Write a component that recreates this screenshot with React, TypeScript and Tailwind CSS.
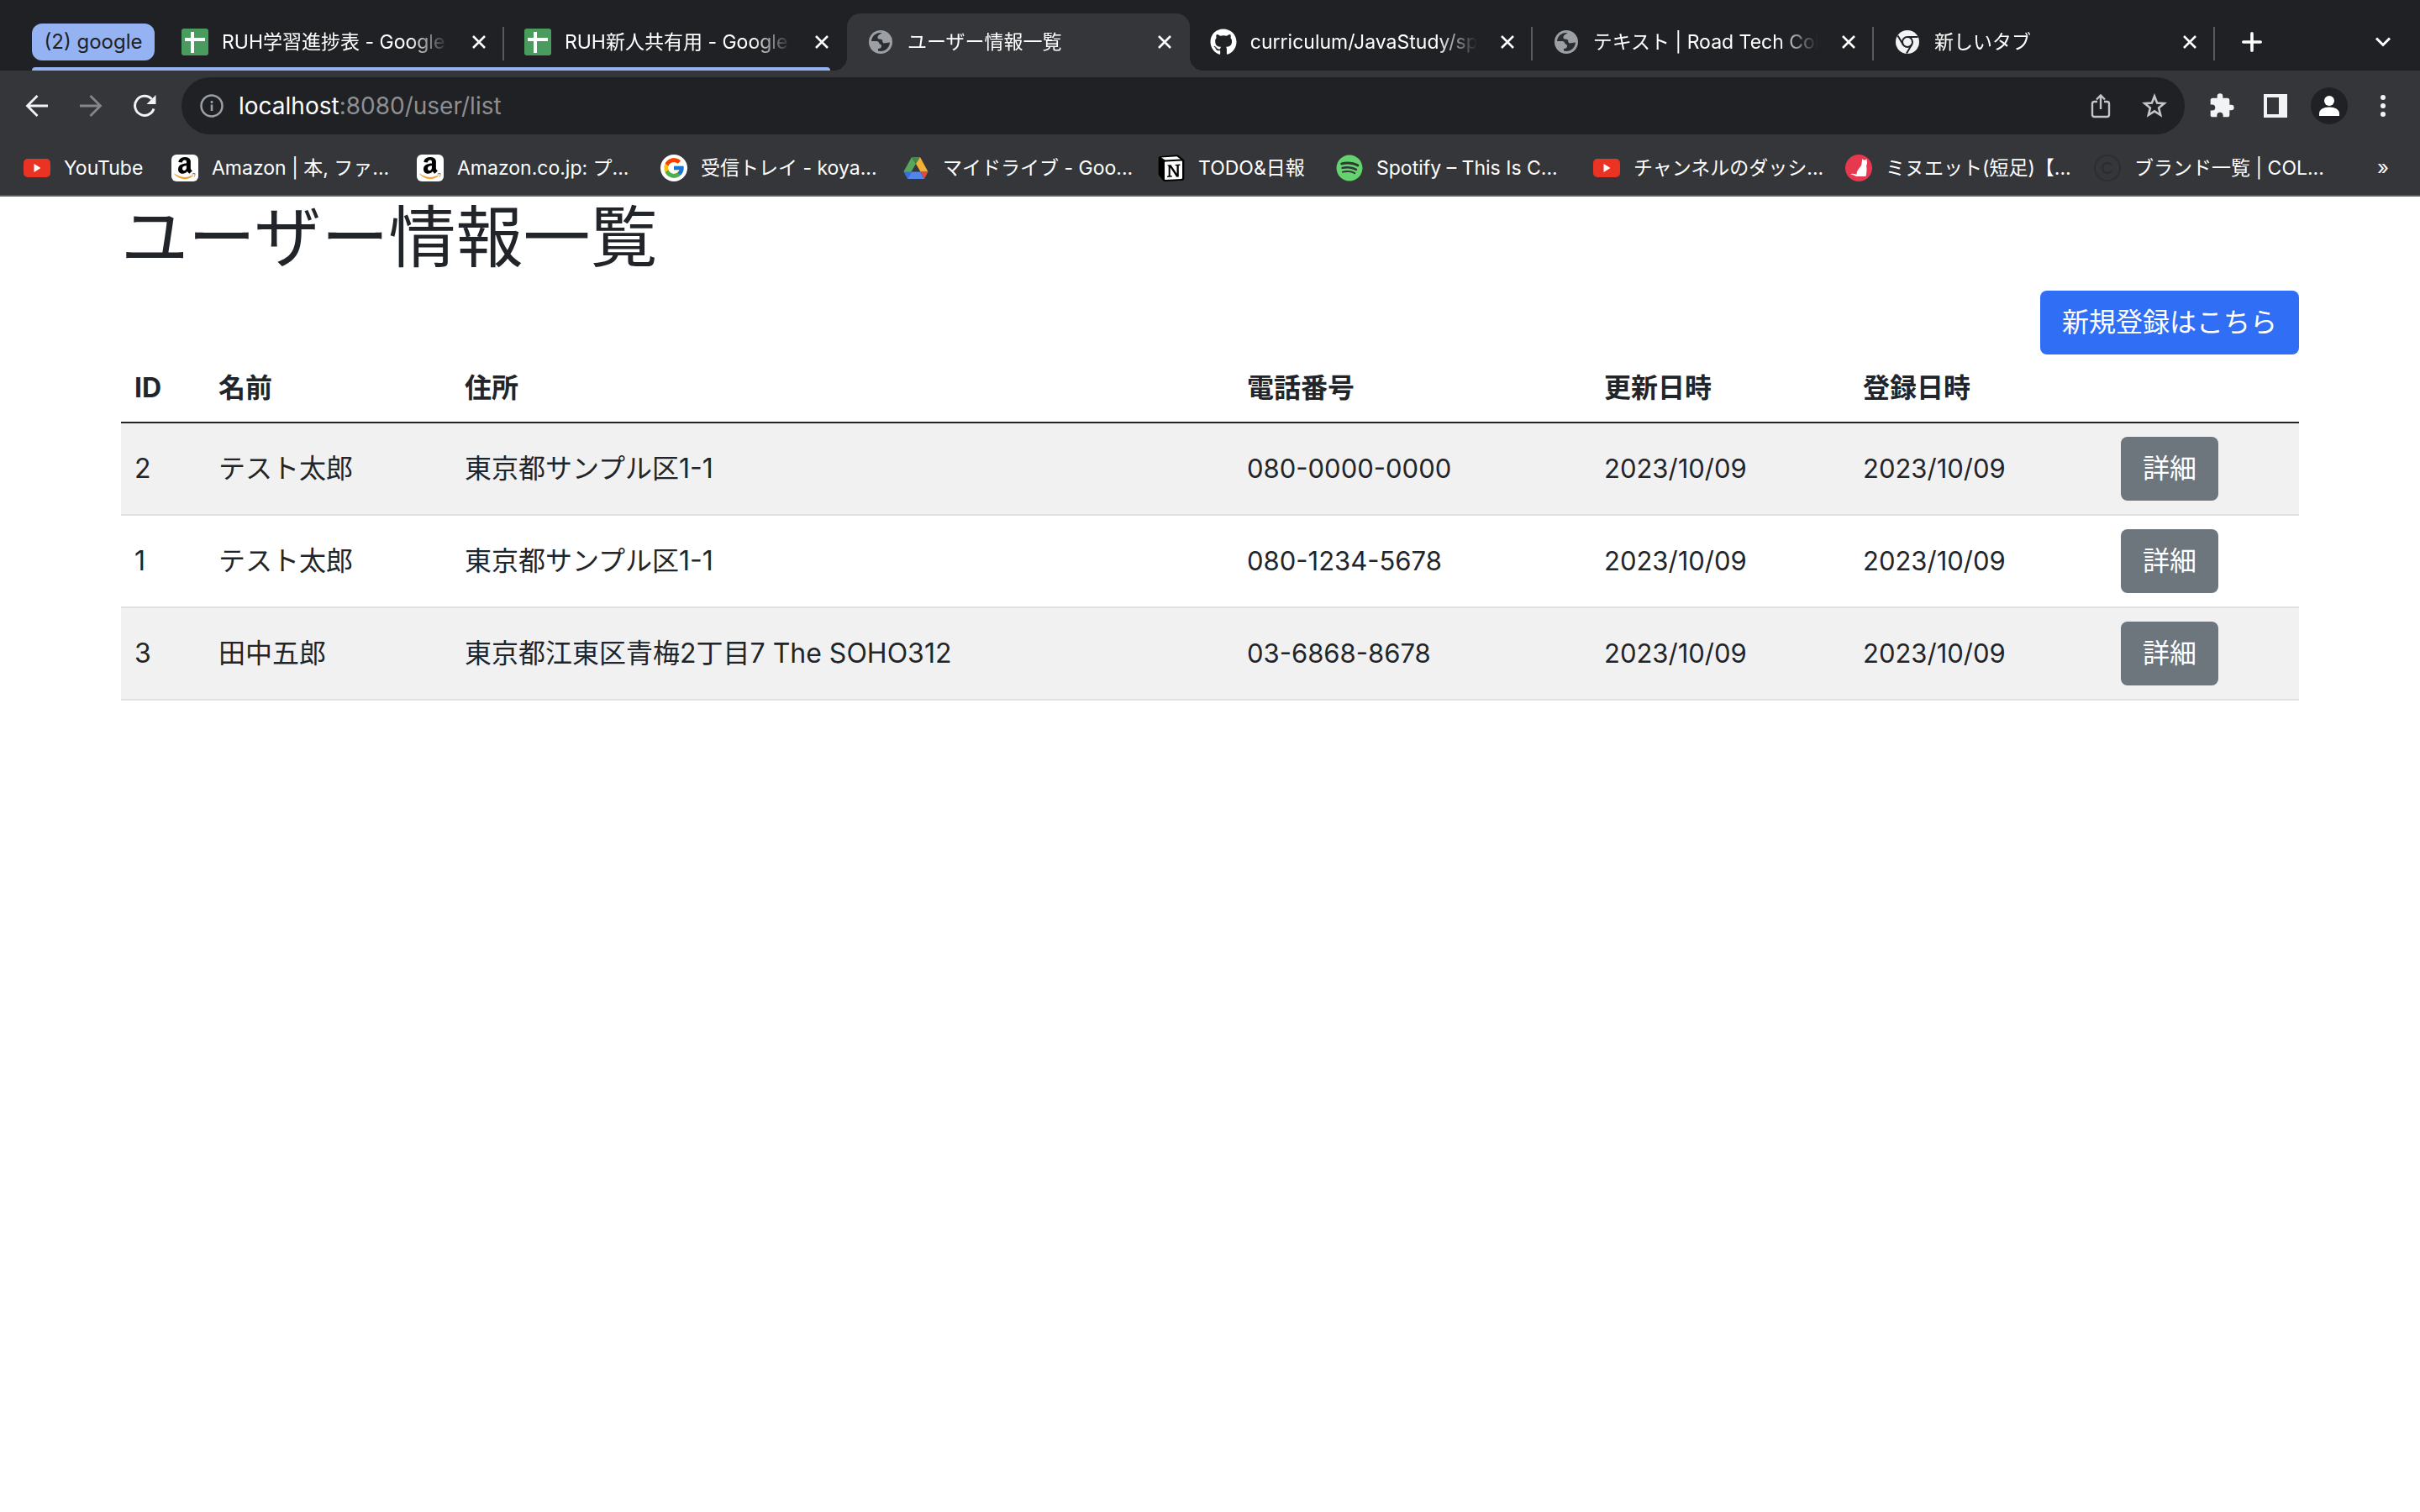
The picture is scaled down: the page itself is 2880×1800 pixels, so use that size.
import { FaAmazon, FaGithub, FaSpotify } from "react-icons/fa";
import { FcGoogle } from "react-icons/fc";
import type { ReactNode } from "react";

function SheetsIcon() {
  return (
    <svg viewBox="0 0 32 32" className="size-8">
      <rect width="32" height="32" rx="3" fill="#4a9c5e" />
      <path d="M13 4v25M4 13h24" stroke="#fff" strokeWidth="4" />
    </svg>
  );
}

function GlobeIcon() {
  return (
    <svg viewBox="0 0 32 32" className="size-8">
      <circle cx="16" cy="16" r="14" fill="#9aa0a6" />
      <path d="M5 15A11 11 0 0 1 17.500 5C15.500 7 12.500 7.500 12.500 10.500c0 2.500 2.500 1.800 4.500 2.500 2 .7.500 4 3 4.500l7-1A11 11 0 0 1 13 26.600V24c3 0 4-1.500 4-3.500s-3-2-3-3.500c0-2-3-2-5-2z" fill="#2c2d30" />
    </svg>
  );
}

function ChromeIcon() {
  return (
    <svg viewBox="0 0 32 32" className="size-8">
      <circle cx="16" cy="16" r="14" fill="#f1f3f4" />
      <circle cx="16" cy="16" r="6" fill="none" stroke="#202124" strokeWidth="2" />
      <path d="M16 10H28.500M10.800 19 4.500 8.500M21.200 19 15 29.500" stroke="#202124" strokeWidth="2" />
    </svg>
  );
}

function YouTubeIcon() {
  return (
    <svg viewBox="0 0 32 32" className="size-8">
      <rect y="5" width="32" height="22" rx="5" fill="#ea3323" />
      <path d="M12.500 11v10l8-5z" fill="#fff" />
    </svg>
  );
}

function AmazonIcon() {
  return (
    <span className="relative flex size-8 items-center justify-center rounded-md bg-white">
      <FaAmazon className="size-[30px] text-black [clip-path:inset(0_0_27%_0)]" />
      <FaAmazon className="absolute size-[30px] text-[#f0a136] [clip-path:inset(73%_0_0_0)]" />
    </span>
  );
}

function GoogleIcon() {
  return (
    <span className="flex size-8 items-center justify-center rounded-full bg-white">
      <FcGoogle className="size-7" />
    </span>
  );
}

function DriveIcon() {
  return (
    <svg viewBox="0 0 32 32" className="size-8">
      <path d="M11 3 1.500 20 6 28 16 11z" fill="#58a55c" />
      <path d="M11 3h10l-5 8z" fill="#3d8b47" />
      <path d="M21 3 16 11l5.500 9.500h9z" fill="#f2b136" />
      <path d="M1.500 20.500H11L6 29z" fill="#3a6ee0" />
      <path d="M11 20.500h10.500L26 29H6z" fill="#5086ec" />
      <path d="M21.500 20.500h9L26 29z" fill="#dd4f3c" />
    </svg>
  );
}

function NotionIcon() {
  return (
    <svg viewBox="0 0 32 32" className="size-8">
      <path d="M3 2 21 .500c2-.2 3 .1 4.500 1.200l4.500 3.500c1 .7 1.300 1.300 1.300 2.500v20.500c0 1.500-.7 2.500-2.300 2.600L9 32c-1.300 0-2-.2-3-1.300L1.800 25.500C1 24.500.700 23.800.700 22.800V4.500C.700 3 1.500 2.200 3 2z" fill="#000" />
      <path d="M4 3.600 22.500 2.200 27 5.400 8.500 6.600z" fill="#fff" />
      <path d="M8 9.500c0-.6.400-1 1-1L28 7.400c.600 0 1 .3 1 1v19.300c0 .7-.4 1.100-1 1.200L9 30c-.6 0-1-.4-1-1z" fill="#fff" />
      <path d="M11 12.500l4.500-.3 7 10.500v-9.200l-2-.4v-1.200l6-.4v1.200l-1.700.6v13.200l-2.600.3-7.500-11.600v9.800l2.300.6v1l-6 .4v-1.200l1.700-.6V14z" fill="#000" />
    </svg>
  );
}

function CatIcon() {
  return (
    <svg viewBox="0 0 32 32" className="size-8">
      <circle cx="16" cy="16" r="16" fill="#e63950" />
      <path d="M20.500 5l1.500 1.500h2L25.500 5l.5 4.500c.2 2-1 2.800-.8 4.500.6 4 .3 8-.7 12H14c-1.500 0-2.500-1-4-1.500-1.300-.4-2.600-.5-4-1 2.500-1.500 5-.8 7.500.2C13.500 19 17 16 19 13c.8-2 .5-5 1.500-8z" fill="#fff" />
    </svg>
  );
}

function BrandIcon() {
  return (
    <svg viewBox="0 0 32 32" className="size-8">
      <circle cx="16" cy="16" r="15" fill="none" stroke="#2b2c2f" strokeWidth="1.500" />
      <path d="M21 12.500a6 6 0 1 0 0 7" fill="none" stroke="#2b2c2f" strokeWidth="2" />
    </svg>
  );
}

type Tab = { title: string; icon: ReactNode; size: string; active?: boolean; divider?: boolean };

const tabs: Tab[] = [
  { title: "RUH学習進捗表 - Google", icon: <SheetsIcon />, size: "flex-[408]", divider: true },
  { title: "RUH新人共有用 - Google", icon: <SheetsIcon />, size: "flex-[408]" },
  { title: "ユーザー情報一覧", icon: <GlobeIcon />, size: "flex-[408]", active: true },
  { title: "curriculum/JavaStudy/sp", icon: <FaGithub className="size-8 text-white" />, size: "flex-[408]", divider: true },
  { title: "テキスト | Road Tech Col", icon: <GlobeIcon />, size: "flex-[406]", divider: true },
  { title: "新しいタブ", icon: <ChromeIcon />, size: "flex-[406]", divider: true },
];

const bookmarks = [
  { title: "YouTube", icon: <YouTubeIcon />, width: "w-[176px]" },
  { title: "Amazon | 本, ファ...", icon: <AmazonIcon />, width: "w-[292px]" },
  { title: "Amazon.co.jp: プ...", icon: <AmazonIcon />, width: "w-[290px]" },
  { title: "受信トレイ - koya...", icon: <GoogleIcon />, width: "w-[288px]" },
  { title: "マイドライブ - Goo...", icon: <DriveIcon />, width: "w-[304px]" },
  { title: "TODO&日報", icon: <NotionIcon />, width: "w-[212px]" },
  { title: "Spotify – This Is C...", icon: <FaSpotify className="size-8 text-[#65d36e]" />, width: "w-[306px]" },
  { title: "チャンネルのダッシ...", icon: <YouTubeIcon />, width: "w-[300px]" },
  { title: "ミヌエット(短足)【...", icon: <CatIcon />, width: "w-[296px]" },
  { title: "ブランド一覧 | COL...", icon: <BrandIcon />, width: "w-[296px]" },
];

const users = [
  { id: 2, name: "テスト太郎", address: "東京都サンプル区1-1", tel: "080-0000-0000", updated: "2023/10/09", created: "2023/10/09" },
  { id: 1, name: "テスト太郎", address: "東京都サンプル区1-1", tel: "080-1234-5678", updated: "2023/10/09", created: "2023/10/09" },
  { id: 3, name: "田中五郎", address: "東京都江東区青梅2丁目7 The SOHO312", tel: "03-6868-8678", updated: "2023/10/09", created: "2023/10/09" },
];

function TabItem({ tab }: { tab: Tab }) {
  return (
    <div className={`relative flex h-full min-w-0 items-center rounded-t-2xl pr-3.5 pl-6 ${tab.size} ${tab.active ? "bg-[#35363a]" : ""}`}>
      {tab.active && (
        <>
          <span className="absolute bottom-0 -left-4 size-4 bg-[radial-gradient(circle_at_0_0,transparent_16px,#35363a_16px)]" />
          <span className="absolute -right-4 bottom-0 size-4 bg-[radial-gradient(circle_at_100%_0,transparent_16px,#35363a_16px)]" />
        </>
      )}
      <span className="shrink-0">{tab.icon}</span>
      <span className="mr-5 ml-4 min-w-0 flex-1 overflow-hidden text-[23px] whitespace-nowrap text-white [mask-image:linear-gradient(to_right,black_calc(100%-48px),transparent)]">
        {tab.title}
      </span>
      <button aria-label="タブを閉じる" className="flex size-8 shrink-0 items-center justify-center">
        <svg viewBox="0 0 16 16" className="size-4">
          <path d="M1 1l14 14M15 1 1 15" stroke="#fff" strokeWidth="2.600" />
        </svg>
      </button>
      {tab.divider && <span className="absolute right-0 bottom-3 h-10 w-0.5 bg-[#5a5b5e]" />}
    </div>
  );
}

function TabStrip() {
  return (
    <div className="flex h-[84px] bg-[#202124] pt-4 pl-[38px]">
      <div className="relative flex w-[154px] shrink-0 items-center">
        <button className="h-11 w-[146px] rounded-xl bg-[#95b2f3] text-2xl text-[#202124]">(2) google</button>
        <span className="absolute bottom-0 left-0 h-1 w-[950px] rounded-t-sm bg-[#95b2f3]" />
      </div>
      <div className="flex min-w-0 flex-1">
        {tabs.map((tab) => (
          <TabItem key={tab.title} tab={tab} />
        ))}
      </div>
      <div className="flex w-[244px] shrink-0 items-center justify-between pr-7 pl-7">
        <button aria-label="新しいタブを開く" className="flex size-8 items-center justify-center">
          <svg viewBox="0 0 24 24" className="size-6">
            <path d="M12 1.800v20.400M1.800 12h20.400" stroke="#fff" strokeWidth="3.600" strokeLinecap="round" />
          </svg>
        </button>
        <button aria-label="タブを検索" className="flex size-8 items-center justify-center">
          <svg viewBox="0 0 20 12" className="h-3 w-5">
            <path d="M2 1.500l8 8 8-8" fill="none" stroke="#fff" strokeWidth="3" />
          </svg>
        </button>
      </div>
    </div>
  );
}

function IconButton({ label, children }: { label: string; children: ReactNode }) {
  return (
    <button aria-label={label} className="flex size-16 shrink-0 items-center justify-center">
      {children}
    </button>
  );
}

function Toolbar() {
  return (
    <div className="flex h-[84px] items-center bg-[#35363a] pr-3 pl-3">
      <IconButton label="戻る">
        <svg viewBox="0 0 28 28" className="size-7" fill="none" stroke="#f1f3f4" strokeWidth="2.800">
          <path d="M27 14H3M14.500 2 2.500 14l12 12" />
        </svg>
      </IconButton>
      <IconButton label="進む">
        <svg viewBox="0 0 28 28" className="size-7" fill="none" stroke="#85868a" strokeWidth="2.800">
          <path d="M1 14h24M13.500 2l12 12-12 12" />
        </svg>
      </IconButton>
      <IconButton label="再読み込み">
        <svg viewBox="0 0 28 28" className="size-7">
          <path d="M25 17.500A11.500 11.500 0 1 1 22.500 6" fill="none" stroke="#f1f3f4" strokeWidth="3" />
          <path d="M27.500 1v11h-11z" fill="#f1f3f4" />
        </svg>
      </IconButton>
      <div className="ml-3 flex h-[68px] min-w-0 flex-1 items-center rounded-full bg-[#202124] pr-1 pl-5.5">
        <svg viewBox="0 0 28 28" className="size-7 shrink-0">
          <circle cx="14" cy="14" r="12.500" fill="none" stroke="#9aa0a6" strokeWidth="2.500" />
          <path d="M14 12.500v7.500M14 8v3" stroke="#9aa0a6" strokeWidth="2.600" />
        </svg>
        <div className="ml-4.5 flex-1 text-[28px] text-[#8e8f92]">
          <span className="text-white">localhost</span>:8080/user/list
        </div>
        <IconButton label="共有">
          <svg viewBox="0 0 24 30" className="h-[30px] w-6" fill="none" stroke="#c4c5c7" strokeWidth="2.400">
            <path d="M8 10H4.500A2.500 2.500 0 0 0 2 12.500v13A2.500 2.500 0 0 0 4.500 28h15a2.500 2.500 0 0 0 2.500-2.500v-13a2.500 2.500 0 0 0-2.500-2.500H16M12 19V3M7 7.500l5-5 5 5" />
          </svg>
        </IconButton>
        <IconButton label="ブックマークに追加">
          <svg viewBox="0 0 30 30" className="size-[30px]" fill="none" stroke="#c4c5c7" strokeWidth="2.600">
            <path d="M15 3.500l3.100 8 8.600.6-6.600 5.500 2.100 8.400L15 21.400 7.800 26l2.100-8.400-6.600-5.500 8.600-.6z" />
          </svg>
        </IconButton>
      </div>
      <div className="flex pl-3">
        <IconButton label="拡張機能">
          <svg viewBox="0 0 24 24" className="size-8" fill="#f1f3f4">
            <path d="M20.500 11H19V7a2 2 0 0 0-2-2h-4V3.500a2.500 2.500 0 0 0-5 0V5H4a2 2 0 0 0-2 2v3.800h1.500a2.700 2.700 0 0 1 0 5.400H2V20a2 2 0 0 0 2 2h3.800v-1.500a2.700 2.700 0 0 1 5.400 0V22H17a2 2 0 0 0 2-2v-4h1.500a2.500 2.500 0 0 0 0-5z" />
          </svg>
        </IconButton>
        <IconButton label="サイドパネル">
          <svg viewBox="0 0 28 28" className="size-7">
            <path d="M0 0h28v28H0zM4 4v20h14V4z" fill="#f1f3f4" fillRule="evenodd" />
          </svg>
        </IconButton>
        <IconButton label="プロフィール">
          <svg viewBox="0 0 44 44" className="size-11">
            <circle cx="22" cy="22" r="22" fill="#202124" />
            <circle cx="22" cy="16" r="6" fill="#fff" />
            <path d="M10 34v-3c0-4.500 5-7.500 12-7.500s12 3 12 7.500v3z" fill="#fff" />
          </svg>
        </IconButton>
        <IconButton label="メニュー">
          <svg viewBox="0 0 6 28" className="h-7 w-1.5" fill="#f1f3f4">
            <circle cx="3" cy="4" r="3" />
            <circle cx="3" cy="14" r="3" />
            <circle cx="3" cy="24" r="3" />
          </svg>
        </IconButton>
      </div>
    </div>
  );
}

function BookmarksBar() {
  return (
    <nav className="flex h-[66px] items-center border-b-2 border-[#5b5c5f] bg-[#35363a] pr-7 pl-7 text-[23px] text-white">
      {bookmarks.map((b) => (
        <a key={b.title} href="#" className={`flex shrink-0 items-center gap-4 whitespace-nowrap ${b.width}`}>
          <span className="shrink-0">{b.icon}</span>
          {b.title}
        </a>
      ))}
      <button aria-label="その他のブックマーク" className="ml-auto flex size-8 items-center justify-center text-2xl">»</button>
    </nav>
  );
}

const headers = [
  { label: "ID", width: "w-[100px]" },
  { label: "名前", width: "w-[293px]" },
  { label: "住所", width: "w-auto" },
  { label: "電話番号", width: "w-[425px]" },
  { label: "更新日時", width: "w-[308px]" },
  { label: "登録日時", width: "w-[307px]" },
  { label: "", width: "w-[228px]" },
];

export default function App() {
  return (
    <div className="min-h-screen bg-white font-['Inter','Noto_Sans_CJK_JP',sans-serif]" lang="ja">
      <header>
        <TabStrip />
        <Toolbar />
        <BookmarksBar />
      </header>
      <main className="mx-auto max-w-[2640px] px-6 text-[32px] leading-[48px] text-[#212529]">
        <h1 className="mb-4 text-[80px] leading-[96px] font-normal">ユーザー情報一覧</h1>
        <div className="flex justify-end">
          <a href="#" className="rounded-lg bg-[#306ef6] px-[26px] py-3.5 text-white">新規登録はこちら</a>
        </div>
        <table className="w-full table-fixed text-left">
          <thead>
            <tr className="border-b-2 border-[#212529]">
              {headers.map((h) => (
                <th key={h.label} className={`p-4 font-bold ${h.width}`}>{h.label}</th>
              ))}
            </tr>
          </thead>
          <tbody>
            {users.map((u) => (
              <tr key={u.id} className="border-b-2 border-[#dee2e6] odd:bg-[#f1f1f1]">
                <td className="p-4">{u.id}</td>
                <td className="p-4">{u.name}</td>
                <td className="p-4">{u.address}</td>
                <td className="p-4 text-[31px]">{u.tel}</td>
                <td className="p-4 text-[31px]">{u.updated}</td>
                <td className="p-4 text-[31px]">{u.created}</td>
                <td className="p-4">
                  <button className="block rounded-lg bg-[#6d757d] px-[26px] py-3.5 text-white">詳細</button>
                </td>
              </tr>
            ))}
          </tbody>
        </table>
      </main>
    </div>
  );
}
